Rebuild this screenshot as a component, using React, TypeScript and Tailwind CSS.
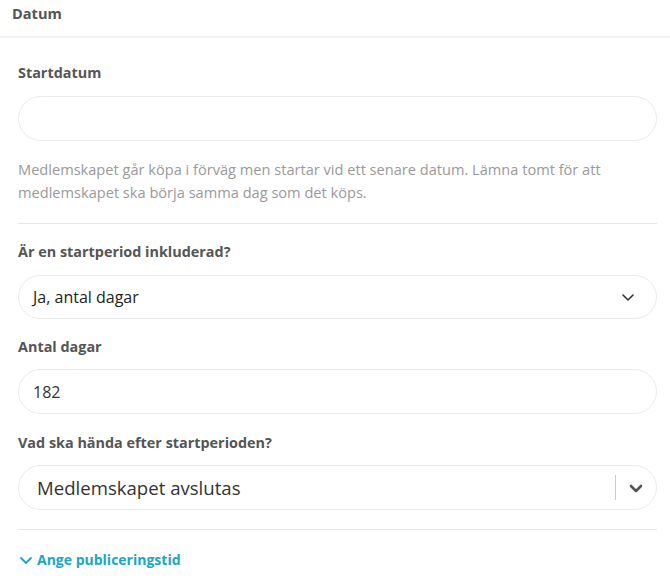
import React from 'react';

const font = { fontFamily: '"Open Sans", "Noto Sans", sans-serif' };

function Label({ children, className = '' }: { children: React.ReactNode; className?: string }) {
  return <div className={`text-[14.4px] font-bold leading-5 text-[#555] ${className}`}>{children}</div>;
}

function Chevron({ className = '' }: { className?: string }) {
  return (
    <svg viewBox="0 0 16 16" className={className} fill="none" stroke="currentColor" strokeLinecap="round" strokeLinejoin="round">
      <path d="M3 6l5 5 5-5" />
    </svg>
  );
}

export default function App() {
  return (
    <div className="min-h-screen w-[670px] bg-white" style={font}>
      <div className="h-[38px] border-b-2 border-[#f3f3f3] pl-3">
        <div className="text-[14.6px] font-bold leading-[26px] text-[#555]">Datum</div>
      </div>

      <div className="pl-[18px] pr-[13px]">
        <Label className="mt-[25px]">Startdatum</Label>
        <div className="mt-[13px] h-[45px] rounded-full border border-[#ebebeb] bg-white" />
        <p className="mt-[17px] text-[14.6px] leading-[23px] text-[#9a9a9a]">
          Medlemskapet går köpa i förväg men startar vid ett senare datum. Lämna tomt för att medlemskapet ska börja samma dag som det köps.
        </p>

        <div className="mt-[19px] h-px bg-[#e6e6e6]" />

        <Label className="mt-[18px]">Är en startperiod inkluderad?</Label>
        <div className="mt-[13px] flex h-[44px] items-center rounded-full border border-[#ebebeb] pl-[14px] pr-[20px]">
          <span className="flex-1 text-[16px] text-[#222]">Ja, antal dagar</span>
          <Chevron className="h-4 w-4 text-[#333] [stroke-width:1.6]" />
        </div>

        <Label className="mt-[18px]">Antal dagar</Label>
        <div className="mt-[12px] flex h-[45px] items-center rounded-full border border-[#ebebeb] pl-[14px]">
          <span className="text-[16px] text-[#333]">182</span>
        </div>

        <Label className="mt-[19px]">Vad ska hända efter startperioden?</Label>
        <div className="mt-[12px] flex h-[45px] items-center rounded-full border border-[#ebebeb] pl-[18px] pr-[12px]">
          <span className="flex-1 text-[18.6px] text-[#333]">Medlemskapet avslutas</span>
          <div className="h-[25px] w-px bg-[#cccccc]" />
          <Chevron className="ml-[12px] h-[16px] w-[16px] text-[#555] [stroke-width:2.6]" />
        </div>

        <div className="mt-[19px] h-px bg-[#e6e6e6]" />

        <div className="mt-[20px] flex items-center gap-[3px] text-[14px] font-bold leading-5 text-[#19a7c7]">
          <Chevron className="h-[16px] w-[16px] [stroke-width:1.8]" />
          <span>Ange publiceringstid</span>
        </div>
      </div>
    </div>
  );
}
